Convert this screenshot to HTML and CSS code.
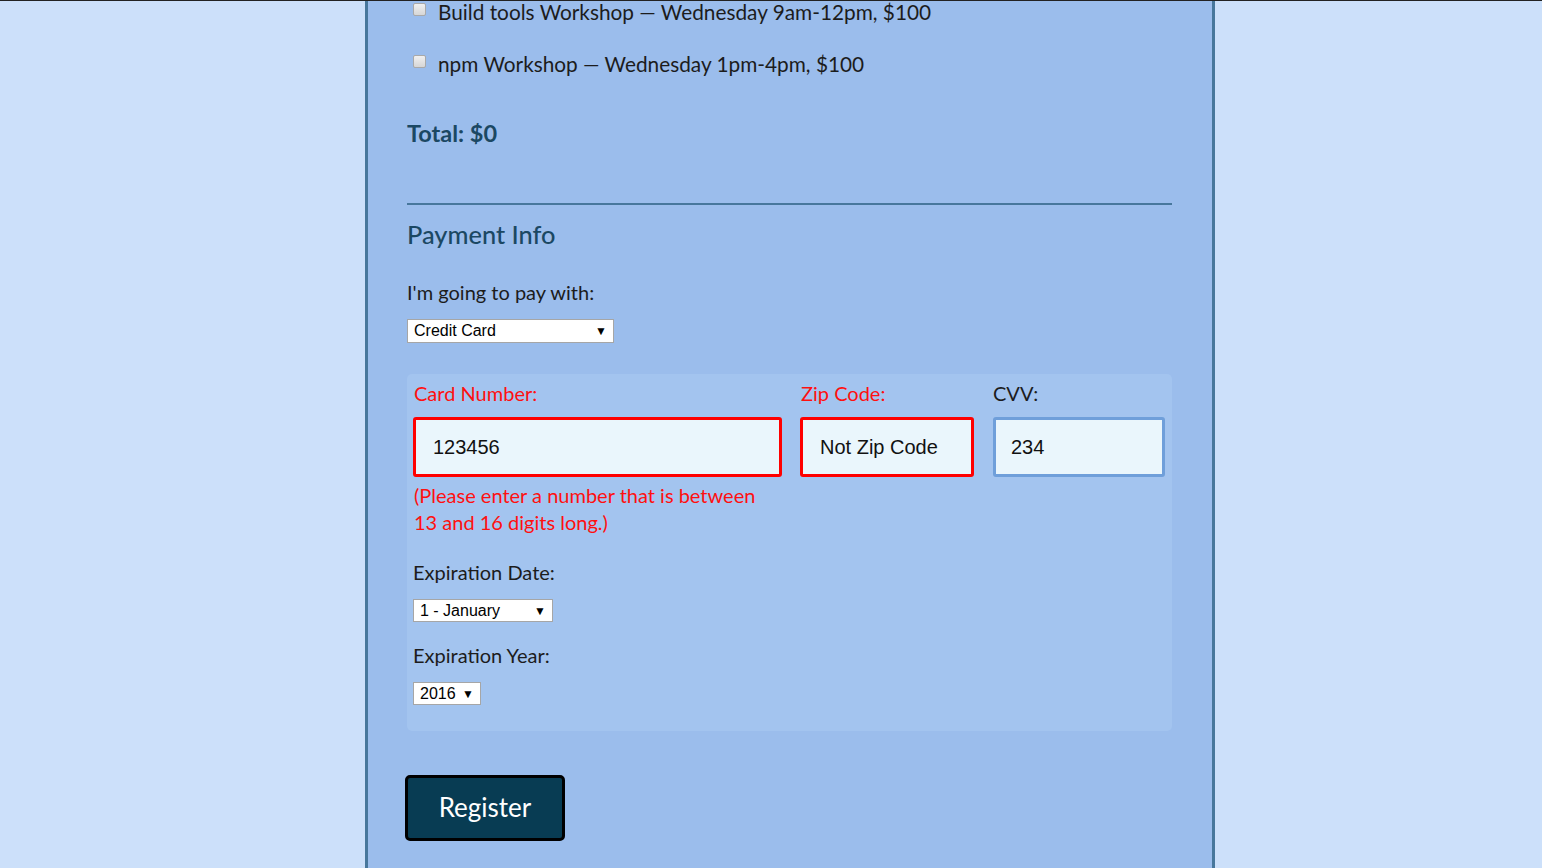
FILE: index.html
```html
<!DOCTYPE html>
<html lang="en">
<head>
<meta charset="utf-8">
<title>Register</title>
<link rel="stylesheet" href="styles.css">
</head>
<body>
<div class="page">
  <form class="container">
    <div class="activities">
      <label class="workshop"><span class="checkbox"></span>Build tools Workshop — Wednesday 9am-12pm, $100</label>
      <label class="workshop"><span class="checkbox"></span>npm Workshop — Wednesday 1pm-4pm, $100</label>
      <p class="total">Total: $0</p>
    </div>
    <hr class="divider">
    <h2 class="section-title">Payment Info</h2>
    <p class="label pay-label">I'm going to pay with:</p>
    <div class="select select-payment"><span>Credit Card</span><span class="arrow">▼</span></div>

    <div class="card-box">
      <div class="card-grid">
        <div class="field">
          <p class="label error">Card Number:</p>
          <div class="input invalid">123456</div>
          <p class="error-msg">(Please enter a number that is between 13 and 16 digits long.)</p>
        </div>
        <div class="field">
          <p class="label error">Zip Code:</p>
          <div class="input invalid">Not Zip Code</div>
        </div>
        <div class="field">
          <p class="label">CVV:</p>
          <div class="input valid">234</div>
        </div>
      </div>
      <p class="label exp-label">Expiration Date:</p>
      <div class="select select-month"><span>1 - January</span><span class="arrow">▼</span></div>
      <p class="label exp-label year-label">Expiration Year:</p>
      <div class="select select-year"><span>2016</span><span class="arrow">▼</span></div>
    </div>

    <button type="button" class="register">Register</button>
  </form>
</div>
</body>
</html>
```

FILE: styles.css
```css
html, body {
  margin: 0;
  padding: 0;
}
body {
  background: #cce0fa;
  border-top: 1px solid #222;
  font-family: "Lato", "Noto Sans", sans-serif;
  color: #1c1c1c;
  height: 867px;
  overflow: hidden;
}
.page {
  display: flex;
  height: 100%;
  padding-left: 365px;
}
.container {
  width: 765px;
  background: #9bbdec;
  border-left: 3px solid #47779c;
  border-right: 3px solid #47779c;
  padding: 0 40px 0 39px;
  height: 100%;
}
.activities {
  padding-left: 6px;
}
.workshop {
  display: flex;
  align-items: center;
  height: 24px;
  margin-top: -1px;
  margin-bottom: 29px;
  font-size: 20.8px;
  line-height: 24px;
}
.checkbox {
  width: 11px;
  height: 11px;
  border: 1px solid #a9a9a9;
  border-radius: 2px;
  background: linear-gradient(#f0f0f0, #d6d6d6);
  margin-right: 12px;
  margin-top: -5px;
  flex: none;
}
.total {
  margin: 43px 0 0 -6px;
  font-size: 23.5px;
  line-height: 28px;
  font-weight: 700;
  color: #1b4863;
}
.divider {
  margin: 56px 0 0;
  border: 0;
  height: 2px;
  background: #47779c;
}
.section-title {
  margin: 14px 0 0;
  font-size: 25.4px;
  line-height: 30px;
  font-weight: 500;
  color: #1b4863;
}
.label {
  margin: 0;
  font-size: 20px;
  line-height: 24px;
}
.pay-label {
  margin-top: 31px;
}
.select {
  display: flex;
  align-items: center;
  justify-content: space-between;
  box-sizing: border-box;
  background: #fff;
  border: 1px solid #a6a6a6;
  font-family: "Liberation Sans", Arial, sans-serif;
  font-size: 16px;
  color: #000;
  padding: 0 6px 0 6px;
}
.select .arrow {
  font-size: 12px;
  line-height: 1;
}
.select-payment {
  margin-top: 15px;
  width: 207px;
  height: 24px;
}
.card-box {
  margin-top: 31px;
  background: #a3c4ef;
  border-radius: 5px;
  padding: 7px 6px 26px;
}
.card-grid {
  display: grid;
  grid-template-columns: 369px 174px 173px;
  column-gap: 18px;
}
.field:first-child .label,
.field:first-child .error-msg {
  margin-left: 1px;
}
.field:nth-child(2) .label {
  margin-left: 1px;
}
.field:last-child {
  margin-left: 1px;
}
.error {
  color: #ff1010;
}
.input {
  margin-top: 12px;
  box-sizing: border-box;
  height: 60px;
  display: flex;
  align-items: center;
  padding-left: 17px;
  background: #eaf6fc;
  border: 3px solid #ff0000;
  border-radius: 3px;
  font-family: "Liberation Sans", Arial, sans-serif;
  font-size: 20px;
  color: #111;
}
.input.valid {
  border-color: #6f9fda;
  padding-left: 15px;
}
.error-msg {
  margin: 5px 0 0;
  font-size: 20px;
  line-height: 27px;
  color: #ff1010;
}
.exp-label {
  margin-top: 24px;
}
.year-label {
  margin-top: 21px;
}
.select-month {
  margin-top: 15px;
  width: 140px;
  height: 23px;
}
.select-year {
  margin-top: 15px;
  width: 68px;
  height: 23px;
}
.register {
  display: block;
  margin: 44px 0 0 -2px;
  width: 160px;
  height: 66px;
  background: #083c53;
  border: 3px solid #000;
  border-radius: 5px;
  color: #fff;
  font-family: "Lato", "Noto Sans", sans-serif;
  font-size: 26px;
  line-height: 1;
  padding: 0 0 2px;
}
```
